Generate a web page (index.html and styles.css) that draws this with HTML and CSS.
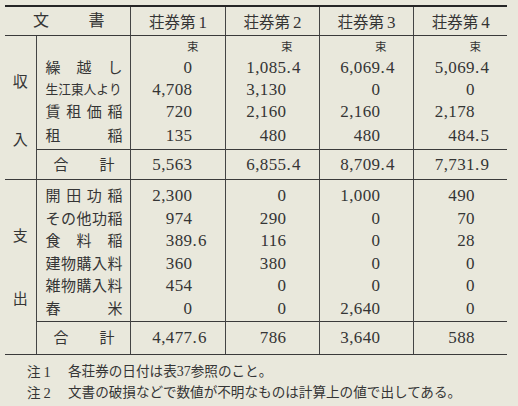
FILE: index.html
```html
<!DOCTYPE html>
<html lang="ja">
<head>
<meta charset="utf-8">
<link rel="stylesheet" href="styles.css">
</head>
<body>
<div class="page">
<table class="tbl">
  <colgroup>
    <col class="c-sec"><col class="c-item"><col class="c-n1"><col class="c-n"><col class="c-n"><col class="c-n">
  </colgroup>
  <thead>
    <tr class="hrow">
      <th colspan="2" class="doc"><div class="lab doclab"><span>文</span><span>書</span></div></th>
      <th>荘券第<span class="hd">1</span></th><th>荘券第<span class="hd">2</span></th><th>荘券第<span class="hd">3</span></th><th>荘券第<span class="hd">4</span></th>
    </tr>
  </thead>
  <tbody>
    <tr class="unit">
      <td rowspan="6" class="sec sec1"><div class="secl"><span>収</span><span class="sec1b">入</span></div></td>
      <td class="item"></td>
      <td class="u">束</td><td class="u">束</td><td class="u">束</td><td class="u">束</td>
    </tr>
    <tr class="h23">
      <td class="item"><div class="lab"><span>繰</span><span>越</span><span>し</span></div></td>
      <td class="n"><span class="i">0</span><span class="d"></span></td>
      <td class="n"><span class="i">1,085</span><span class="d">.4</span></td>
      <td class="n"><span class="i">6,069</span><span class="d">.4</span></td>
      <td class="n"><span class="i">5,069</span><span class="d">.4</span></td>
    </tr>
    <tr class="h22">
      <td class="item"><div class="lab small"><span>生</span><span>江</span><span>東</span><span>人</span><span>よ</span><span>り</span></div></td>
      <td class="n"><span class="i">4,708</span><span class="d"></span></td>
      <td class="n"><span class="i">3,130</span><span class="d"></span></td>
      <td class="n"><span class="i">0</span><span class="d"></span></td>
      <td class="n"><span class="i">0</span><span class="d"></span></td>
    </tr>
    <tr class="h22">
      <td class="item"><div class="lab"><span>賃</span><span>租</span><span>価</span><span>稲</span></div></td>
      <td class="n"><span class="i">720</span><span class="d"></span></td>
      <td class="n"><span class="i">2,160</span><span class="d"></span></td>
      <td class="n"><span class="i">2,160</span><span class="d"></span></td>
      <td class="n"><span class="i">2,178</span><span class="d"></span></td>
    </tr>
    <tr class="h26">
      <td class="item"><div class="lab"><span>租</span><span>稲</span></div></td>
      <td class="n"><span class="i">135</span><span class="d"></span></td>
      <td class="n"><span class="i">480</span><span class="d"></span></td>
      <td class="n"><span class="i">480</span><span class="d"></span></td>
      <td class="n"><span class="i">484</span><span class="d">.5</span></td>
    </tr>
    <tr class="total t1">
      <td class="item"><div class="lab totlab"><span>合</span><span>計</span></div></td>
      <td class="n"><span class="i">5,563</span><span class="d"></span></td>
      <td class="n"><span class="i">6,855</span><span class="d">.4</span></td>
      <td class="n"><span class="i">8,709</span><span class="d">.4</span></td>
      <td class="n"><span class="i">7,731</span><span class="d">.9</span></td>
    </tr>
    <tr class="h27 first">
      <td rowspan="7" class="sec sec2"><div class="secl"><span>支</span><span class="sec2b">出</span></div></td>
      <td class="item"><div class="lab"><span>開</span><span>田</span><span>功</span><span>稲</span></div></td>
      <td class="n"><span class="i">2,300</span><span class="d"></span></td>
      <td class="n"><span class="i">0</span><span class="d"></span></td>
      <td class="n"><span class="i">1,000</span><span class="d"></span></td>
      <td class="n"><span class="i">490</span><span class="d"></span></td>
    </tr>
    <tr class="h23">
      <td class="item"><div class="lab"><span>そ</span><span>の</span><span>他</span><span>功</span><span>稲</span></div></td>
      <td class="n"><span class="i">974</span><span class="d"></span></td>
      <td class="n"><span class="i">290</span><span class="d"></span></td>
      <td class="n"><span class="i">0</span><span class="d"></span></td>
      <td class="n"><span class="i">70</span><span class="d"></span></td>
    </tr>
    <tr class="h22">
      <td class="item"><div class="lab"><span>食</span><span>料</span><span>稲</span></div></td>
      <td class="n"><span class="i">389</span><span class="d">.6</span></td>
      <td class="n"><span class="i">116</span><span class="d"></span></td>
      <td class="n"><span class="i">0</span><span class="d"></span></td>
      <td class="n"><span class="i">28</span><span class="d"></span></td>
    </tr>
    <tr class="h23">
      <td class="item"><div class="lab"><span>建</span><span>物</span><span>購</span><span>入</span><span>料</span></div></td>
      <td class="n"><span class="i">360</span><span class="d"></span></td>
      <td class="n"><span class="i">380</span><span class="d"></span></td>
      <td class="n"><span class="i">0</span><span class="d"></span></td>
      <td class="n"><span class="i">0</span><span class="d"></span></td>
    </tr>
    <tr class="h22">
      <td class="item"><div class="lab"><span>雑</span><span>物</span><span>購</span><span>入</span><span>料</span></div></td>
      <td class="n"><span class="i">454</span><span class="d"></span></td>
      <td class="n"><span class="i">0</span><span class="d"></span></td>
      <td class="n"><span class="i">0</span><span class="d"></span></td>
      <td class="n"><span class="i">0</span><span class="d"></span></td>
    </tr>
    <tr class="h24">
      <td class="item"><div class="lab"><span>舂</span><span>米</span></div></td>
      <td class="n"><span class="i">0</span><span class="d"></span></td>
      <td class="n"><span class="i">0</span><span class="d"></span></td>
      <td class="n"><span class="i">2,640</span><span class="d"></span></td>
      <td class="n"><span class="i">0</span><span class="d"></span></td>
    </tr>
    <tr class="total t2">
      <td class="item"><div class="lab totlab"><span>合</span><span>計</span></div></td>
      <td class="n"><span class="i">4,477</span><span class="d">.6</span></td>
      <td class="n"><span class="i">786</span><span class="d"></span></td>
      <td class="n"><span class="i">3,640</span><span class="d"></span></td>
      <td class="n"><span class="i">588</span><span class="d"></span></td>
    </tr>
  </tbody>
</table>
<div class="notes">
  <div class="note"><span class="nk">注<span class="nd">1</span></span><span>各荘券の日付は表<span class="nn">37</span>参照のこと。</span></div>
  <div class="note"><span class="nk">注<span class="nd">2</span></span><span>文書の破損などで数値が不明なものは計算上の値で出してある。</span></div>
</div>
</div>
</body>
</html>
```

FILE: styles.css
```css
html, body {
  margin: 0;
  padding: 0;
}
body {
  background: #e9e8dc;
  color: #353535;
  font-family: "Liberation Serif", "Noto Sans CJK JP", serif;
  width: 518px;
  height: 406px;
  overflow: hidden;
}
.page {
  padding: 5px 0 0 5px;
}
.tbl {
  border-collapse: collapse;
  table-layout: fixed;
  width: 502px;
}
.c-sec { width: 31px; }
.c-item { width: 94px; }
.c-n1 { width: 95px; }
.c-n { width: 94px; }

.tbl th, .tbl td {
  padding: 0;
  vertical-align: middle;
}
.hrow th {
  height: 28px;
  border-top: 2px solid #262626;
  border-bottom: 1px solid #3a3a3a;
  border-left: 1px solid #444;
  font-size: 15.5px;
  font-weight: normal;
  text-align: center;
  padding-left: 1px;
}
.hrow th.doc {
  border-left: none;
}
.hd {
  font-size: 17px;
  margin-left: 3px;
}
.lab {
  display: flex;
  justify-content: space-between;
  padding: 0 7px 0 9px;
  font-size: 15px;
  line-height: 18px;
}
.lab.small {
  font-size: 12.7px;
  padding: 0 8px 0 9px;
}
.doclab {
  padding: 0 25px 0 27px;
  font-size: 16px;
}
.totlab {
  padding: 0 15px 0 17px;
}
.item {
  border-left: 1px solid #444;
  border-right: 1px solid #444;
}
.n {
  text-align: right;
  padding-right: 16px !important;
  border-left: 1px solid #444;
  font-size: 17px;
  line-height: 18px;
  white-space: nowrap;
}
.n .i {
  letter-spacing: 0.4px;
}
.n .d {
  display: inline-block;
  width: 16px;
  text-align: left;
  letter-spacing: 1.2px;
}
.unit td {
  height: 18px;
}
.u {
  border-left: 1px solid #444;
  text-align: right;
  font-size: 11.5px;
  line-height: 12px;
  padding-right: 26px !important;
  padding-top: 2px !important;
}
.h22 td { height: 22px; }
.h23 td { height: 23px; }
.h24 td { height: 24px; }
.h26 td { height: 26px; }
.h27 td { height: 23px; padding-top: 4px; }
.h27 td.sec { padding-top: 0; }
.total td {
  border-top: 1px solid #3a3a3a;
  border-bottom: 1px solid #3a3a3a;
}
.t1 td { height: 29px; }
.t2 td { height: 32px; }
.sec {
  vertical-align: top !important;
  border-bottom: 1px solid #3a3a3a;
}
.secl {
  display: flex;
  flex-direction: column;
  align-items: center;
  font-size: 15px;
  line-height: 18px;
}
.sec1 .secl { padding-top: 37px; }
.sec1b { margin-top: 40px; }
.sec2 .secl { padding-top: 47px; }
.sec2b { margin-top: 45px; }

.notes {
  margin-top: 7px;
  padding-left: 22px;
  font-size: 13.6px;
  line-height: 20px;
}
.note {
  display: flex;
}
.nk {
  width: 41px;
  flex: none;
}
.nd {
  font-size: 14.5px;
  margin-left: 3px;
}
.nn {
  font-size: 14px;
}
```
